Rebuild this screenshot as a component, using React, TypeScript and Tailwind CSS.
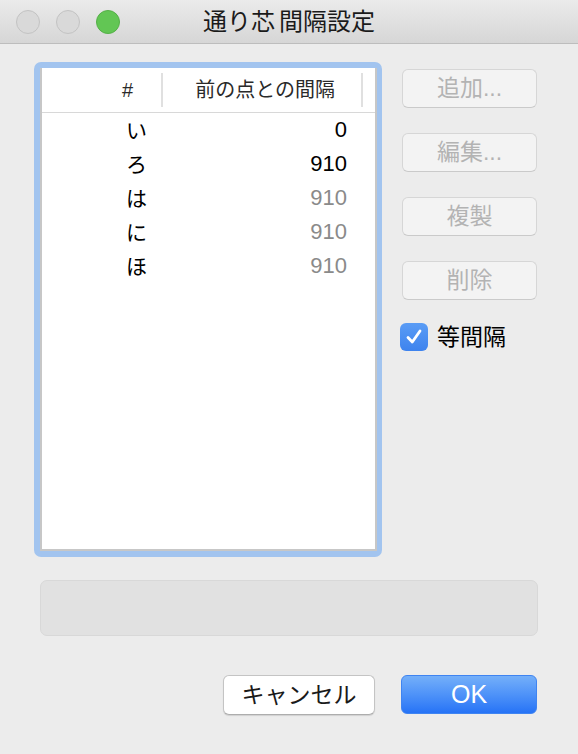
import React from "react";

const rows: { k: string; v: string; dark: boolean }[] = [
  { k: "い", v: "0", dark: true },
  { k: "ろ", v: "910", dark: true },
  { k: "は", v: "910", dark: false },
  { k: "に", v: "910", dark: false },
  { k: "ほ", v: "910", dark: false },
];

function DisabledButton({ label, first }: { label: string; first?: boolean }) {
  return (
    <div
      className={`${first ? "mt-[7px]" : "mt-[25px]"} ml-[2px] w-[135px] h-[39px] rounded-[6px] bg-[#f3f3f3] border border-[#d6d6d6] border-b-[#cacaca] flex items-center justify-center text-[23px] leading-none text-[#b3b3b3]`}
    >
      {label}
    </div>
  );
}

export default function App() {
  return (
    <div className="w-[578px] h-[754px] bg-[#ececec] flex flex-col font-['Liberation_Sans','Noto_Sans_CJK_JP',sans-serif] text-black overflow-hidden">
      {/* Title bar */}
      <div className="h-[44px] shrink-0 grid grid-cols-[1fr_auto_1fr] items-center bg-gradient-to-b from-[#ebebeb] to-[#d6d6d6] border-b border-[#bdbdbd]">
        <div className="flex items-center gap-[16px] pl-[16px]">
          <div className="w-[24px] h-[24px] rounded-full bg-[#d9d9d9] border border-[#c3c3c3]" />
          <div className="w-[24px] h-[24px] rounded-full bg-[#d9d9d9] border border-[#c3c3c3]" />
          <div className="w-[24px] h-[24px] rounded-full bg-[#62c654] border border-[#55b048]" />
        </div>
        <div className="flex items-center text-[24px] leading-none text-[#1a1a1a] whitespace-nowrap">
          <span>通り芯</span>
          <span className="w-[4px]" />
          <span>間隔設定</span>
        </div>
        <div />
      </div>

      {/* Main area */}
      <div className="flex mt-[18px] ml-[34px]">
        {/* Table with focus ring */}
        <div className="w-[348px] h-[495px] rounded-[7px] bg-[#a2c4ef] pt-[6px] pl-[6px] pr-[5px] pb-[6px]">
          <div className="w-full h-full bg-white border-l-2 border-r-2 border-b-2 border-[#c7c7c7] flex flex-col">
            <div className="h-[45px] shrink-0 flex items-center border-b border-[#d8d8d8] text-[20px] text-[#2a2a2a] leading-none">
              <div className="w-[119px] text-right pr-[28px]">#</div>
              <div className="w-[2px] h-[34px] bg-[#e0e0e0]" />
              <div className="w-[198px] text-right pr-[26px]">前の点との間隔</div>
              <div className="w-[2px] h-[34px] bg-[#e0e0e0]" />
            </div>
            {rows.map((r) => (
              <div key={r.k} className="h-[34px] flex items-center leading-none">
                <div className="w-[119px] text-right pr-[14px] text-[21px] text-black">{r.k}</div>
                <div className="w-[2px]" />
                <div className={`w-[198px] text-right pr-[14px] text-[22px] ${r.dark ? "text-black" : "text-[#8a8a8a]"}`}>
                  {r.v}
                </div>
              </div>
            ))}
          </div>
        </div>

        {/* Right column */}
        <div className="ml-[18px] flex flex-col items-start">
          <DisabledButton label="追加..." first />
          <DisabledButton label="編集..." />
          <DisabledButton label="複製" />
          <DisabledButton label="削除" />
          <div className="mt-[23px] flex items-center">
            <div className="w-[28px] h-[28px] rounded-[6px] bg-gradient-to-b from-[#5a9cf5] to-[#3e83ee] flex items-center justify-center">
              <svg width="20" height="20" viewBox="0 0 20 20" fill="none">
                <path d="M4 10.5 L8.3 15 L16 4" stroke="white" strokeWidth="2.8" strokeLinecap="round" strokeLinejoin="round" />
              </svg>
            </div>
            <div className="ml-[9px] text-[23px] leading-none text-black">等間隔</div>
          </div>
        </div>
      </div>

      {/* Status box */}
      <div className="mt-[23px] ml-[40px] w-[498px] h-[56px] rounded-[7px] bg-[#e1e1e1] border border-[#d8d8d8]" />

      {/* Bottom buttons */}
      <div className="mt-[39px] flex pl-[223px]">
        <div className="w-[152px] h-[40px] rounded-[6px] bg-white border border-[#c4c4c4] border-b-[#adadad] shadow-[0_1px_1px_rgba(0,0,0,0.12)] flex items-center justify-center text-[23px] leading-none text-[#1a1a1a]">
          キャンセル
        </div>
        <div className="ml-[26px] w-[136px] h-[39px] rounded-[6px] bg-gradient-to-b from-[#74aff9] to-[#2673f6] border border-[#3f84f1] flex items-center justify-center text-[25px] leading-none text-white">
          OK
        </div>
      </div>
    </div>
  );
}
